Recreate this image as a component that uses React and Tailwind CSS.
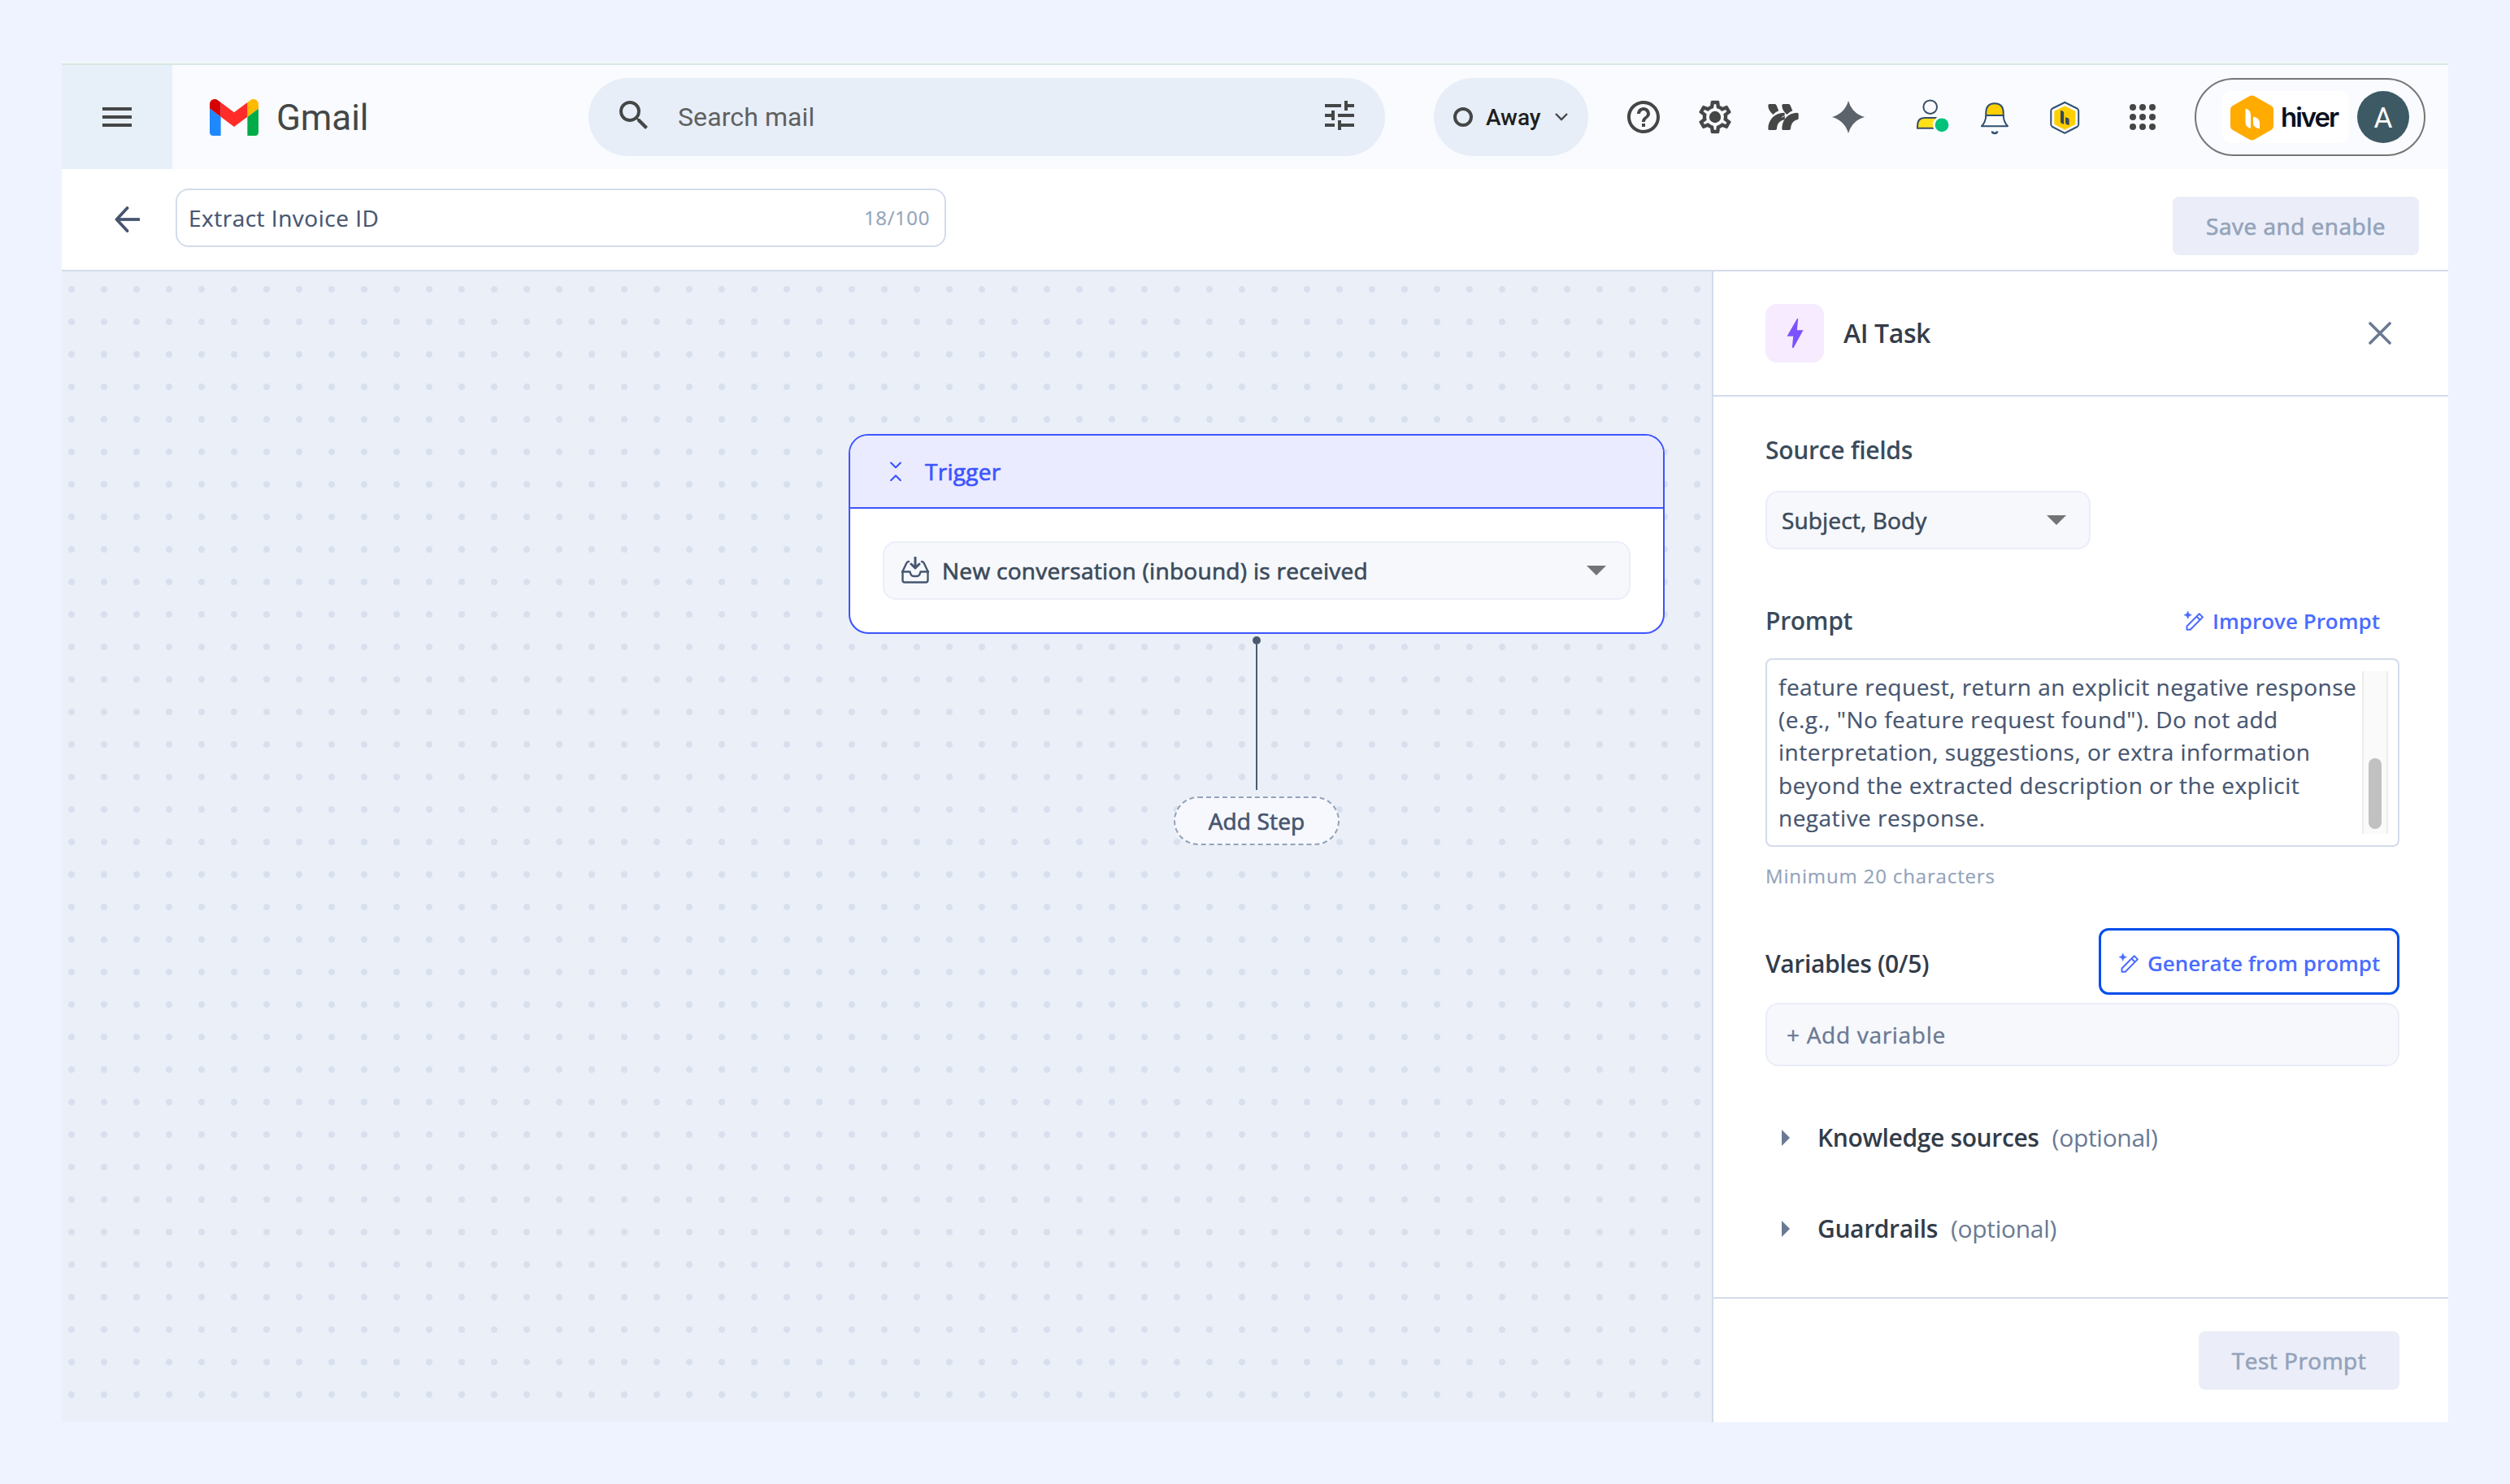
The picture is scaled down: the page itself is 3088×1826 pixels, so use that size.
import React from "react";
import { MdSearch, MdTune, MdHelpOutline } from "react-icons/md";

function GmailMark() {
  return (
    <svg className="h-[45px] w-[60px] shrink-0" viewBox="52 42 88 66">
      <path fill="#1e88ff" d="M58 108h14V74L52 59v43c0 3.32 2.69 6 6 6" />
      <path fill="#00ac47" d="M120 108h14c3.32 0 6-2.69 6-6V59l-20 15" />
      <path fill="#ffb900" d="M120 48v26l20-15v-8c0-7.42-8.47-11.65-14.4-7.2" />
      <path fill="#ff2c29" d="M72 74V48l24 18 24-18v26L96 92" />
      <path fill="#d60000" d="M52 51v8l20 15V48l-5.6-4.2c-5.94-4.45-14.4-.22-14.4 7.2" />
    </svg>
  );
}

function GearIcon({ className }) {
  return (
    <svg className={className} viewBox="0 0 24 24" fill="currentColor">
      <path d="M19.43 12.98c.04-.32.07-.64.07-.98 0-.34-.03-.66-.07-.98l2.11-1.65c.19-.15.24-.42.12-.64l-2-3.46a.5.5 0 0 0-.61-.22l-2.49 1c-.52-.4-1.08-.73-1.69-.98l-.38-2.65A.488.488 0 0 0 14 2h-4c-.25 0-.46.18-.49.42l-.38 2.65c-.61.25-1.17.59-1.69.98l-2.49-1a.566.566 0 0 0-.18-.03c-.17 0-.34.09-.43.25l-2 3.46c-.13.22-.07.49.12.64l2.11 1.65c-.04.32-.07.65-.07.98 0 .33.03.66.07.98l-2.11 1.65c-.19.15-.24.42-.12.64l2 3.46a.5.5 0 0 0 .61.22l2.49-1c.52.4 1.08.73 1.69.98l.38 2.65c.03.24.24.42.49.42h4c.25 0 .46-.18.49-.42l.38-2.65c.61-.25 1.17-.59 1.69-.98l2.49 1c.06.02.12.03.18.03.17 0 .34-.09.43-.25l2-3.46c.12-.22.07-.49-.12-.64l-2.11-1.65zm-1.98-1.71c.04.31.05.52.05.73 0 .21-.02.43-.05.73l-.14 1.13.89.7 1.08.84-.7 1.21-1.27-.51-1.04-.42-.9.68c-.43.32-.84.56-1.25.73l-1.06.43-.16 1.13-.2 1.35h-1.4l-.19-1.35-.16-1.13-1.06-.43c-.43-.18-.83-.41-1.23-.71l-.91-.7-1.06.43-1.27.51-.7-1.21 1.08-.84.89-.7-.14-1.13c-.03-.31-.05-.54-.05-.74s.02-.43.05-.73l.14-1.13-.89-.7-1.08-.84.7-1.21 1.27.51 1.04.42.9-.68c.43-.32.84-.56 1.25-.73l1.06-.43.16-1.13.2-1.35h1.39l.19 1.35.16 1.13 1.06.43c.43.18.83.41 1.23.71l.91.7 1.06-.43 1.27-.51.7 1.21-1.07.85-.89.7.14 1.13z" stroke="currentColor" strokeWidth="0.200" />
      <circle cx="12" cy="12" r="3.6" />
    </svg>
  );
}

function ChevronsIcon({ className }) {
  return (
    <svg className={className} viewBox="0 0 48 48" fill="currentColor">
      <path d="M7 8h6.5q1.5 0 2 1.5l2.8 6.8q-4.5 1.8-7 4.7Q5.300 15.500 5.300 10 5.300 8 7 8z" />
      <path d="M24 8h6.500q1.500 0 2 1.500l2.800 6.800q-4.500 1.800-7 4.700Q22.300 15.500 22.300 10 22.300 8 24 8z" />
      <path d="M5.300 38.500C5.300 27 14 19 24.500 18.800q1.500 0 1.300 1.800v6.600C19.500 28 16.500 32 16 38.200q-.1 1.800-1.800 1.800H7q-1.700 0-1.700-1.500z" />
      <path d="M22.300 38.500c0-11.500 8-19.500 18.500-19.700q1.900 0 1.900 1.800v4.800q0 1.600-1.500 1.800C36.500 28 33.500 32 33 38.200q-.1 1.800-1.800 1.800H24q-1.700 0-1.700-1.500z" />
      <path d="M22 24.500l6-4" stroke="#f9fbff" strokeWidth="0.8" />
    </svg>
  );
}

function PersonIcon({ className }) {
  return (
    <svg className={className} viewBox="0 0 52 52" fill="none">
      <circle cx="24.700" cy="13.700" r="8.300" stroke="#3a4f66" strokeWidth="2" />
      <path d="M9 39.800V37q0-10 9-10h14v12.800z" fill="#ffe11a" stroke="#3a4f66" strokeWidth="2" />
      <circle cx="39" cy="35.800" r="11" fill="#f9fbff" />
      <circle cx="39" cy="35.800" r="8.400" fill="#00c27a" />
    </svg>
  );
}

function BellIcon({ className }) {
  return (
    <svg className={className} viewBox="0 0 48 48" fill="none" stroke="#2f4f6f" strokeWidth="2" strokeLinejoin="round">
      <path d="M13.300 22v-4Q13.800 7.300 24 7.300T34.700 18v4z" fill="#ffcf00" />
      <path d="M13.300 22q-.3 8-5.300 13.300h32Q35 30 34.700 22z" />
      <path d="M21 41.500q0 2.500 3 2.500t3-2.500" strokeWidth="2.600" />
    </svg>
  );
}

function HexIcon({ className }) {
  return (
    <svg className={className} viewBox="0 0 48 48" fill="none">
      <path d="M24.200 6 39.500 13.500Q41.200 14.500 41.200 16.500V33q0 2-1.700 3L24.200 43.800 9 36Q7.300 35 7.300 33V16.500q0-2 1.700-3z" stroke="#2f4f6f" strokeWidth="2" strokeLinejoin="round" />
      <path d="M24.200 11.500 36.300 17.500v14.800L24.200 38.500 12.300 32.300V17.500z" fill="#ffcf00" stroke="#ffcf00" strokeWidth="2" strokeLinejoin="round" />
      <path d="M19 15.700l2.500.8q1.700.8 1.700 2.500v13.700l-2.600-.8q-1.600-.7-1.600-2.400zM25 24.300l2.800.8q1.900.8 1.900 2.500V34l-3-.8q-1.700-.7-1.700-2.400z" fill="#34495e" />
    </svg>
  );
}

function AppsIcon({ className }) {
  return (
    <svg className={className} viewBox="0 0 48 48" fill="currentColor">
      {[12, 24, 36].map((y) => [12, 24, 36].map((x) => <circle key={x + "-" + y} cx={x} cy={y} r="4" />))}
    </svg>
  );
}

function WandIcon() {
  return (
    <svg className="h-6 w-6 shrink-0" viewBox="0 0 24 24" fill="none" stroke="#4a6cff" strokeWidth="2" strokeLinejoin="round">
      <path d="M4.700 0Q5.300 4.100 9.400 4.700 5.300 5.300 4.700 9.400 4.100 5.300 0 4.700 4.100 4.100 4.700 0z" fill="#4a6cff" stroke="#4a6cff" strokeWidth="0.600" />
      <path d="M3.500 22.800v-4.300L18.700 3.200l4.200 4.200L7.700 22.800zM15.400 6.500l4.200 4.200" />
    </svg>
  );
}

function Caret() {
  return (
    <svg className="h-3 w-6 shrink-0" viewBox="0 0 24 12">
      <path d="M0 0h24L12 12z" fill="#737475" />
    </svg>
  );
}

function Header() {
  return (
    <header className="flex h-[132px] w-full items-center border-t-2 border-[#f1f8f7] bg-[#f9fbff] text-[#444746]">
      <div className="flex h-full w-full items-center border-t-2 border-[#d7e6e2]">
        <div className="flex h-full w-[136px] shrink-0 items-center justify-center bg-[#e7eff8]">
          <div className="flex w-9 flex-col gap-[6px]">
            <span className="h-1 bg-[#444746]" />
            <span className="h-1 bg-[#444746]" />
            <span className="h-1 bg-[#444746]" />
          </div>
        </div>
        <div className="ml-[46px] flex w-[211px] shrink-0 items-center gap-[22px]">
          <GmailMark />
          <span className="translate-y-px font-[Roboto,sans-serif] text-[44px] leading-none tracking-[-0.1px] text-[#444746]">Gmail</span>
        </div>
        <div className="ml-[255px] flex h-24 w-[980px] shrink-0 items-center rounded-full bg-[#e7eef8] pl-8 pr-[32px]">
          <MdSearch className="h-12 w-12 -translate-y-0.5" />
          <span className="ml-[30px] grow font-[Roboto,sans-serif] text-[32px] leading-none tracking-[0.1px] text-[#5f6060]">Search mail</span>
          <MdTune className="h-12 w-12 -translate-y-0.5" />
        </div>
        <div className="ml-[60px] flex h-24 w-[190px] shrink-0 items-center rounded-full bg-[#e7eef8] pl-6">
          <span className="h-6 w-6 rounded-full border-4 border-[#444746]" />
          <span className="ml-4 translate-y-px font-[Roboto,sans-serif] text-[28px] leading-none font-medium text-[#1f1f1f]">Away</span>
          <svg className="ml-[17px] h-[10px] w-4" viewBox="0 0 16 10" fill="none">
            <path d="M1 1l7 7 7-7" stroke="#444746" strokeWidth="2.400" />
          </svg>
        </div>
        <MdHelpOutline className="ml-[44px] h-12 w-12 shrink-0" />
        <GearIcon className="ml-10 h-12 w-12 shrink-0" />
        <ChevronsIcon className="ml-9 h-12 w-12 shrink-0" />
        <svg className="ml-8 h-12 w-12 shrink-0" viewBox="0 0 48 48">
          <path d="M24 4Q28.500 19.500 44 24 28.500 28.500 24 44 19.500 28.500 4 24 19.500 19.500 24 4z" fill="#5c636b" />
        </svg>
        <PersonIcon className="ml-[52px] h-[52px] w-[52px] shrink-0" />
        <BellIcon className="ml-7 h-12 w-12 shrink-0" />
        <HexIcon className="ml-[38px] h-12 w-12 shrink-0" />
        <AppsIcon className="ml-12 h-12 w-12 shrink-0" />
        <div className="ml-10 flex h-24 w-[284px] shrink-0 items-center rounded-full border-2 border-[#747775] pl-8 pr-[18px]">
          <div className="flex h-16 w-[156px] items-center rounded-[12px] bg-white pl-[10px]">
            <svg className="h-[56px] w-[53px] translate-y-px" viewBox="0 0 53 56">
              <path d="M23.500 1.200q3-1.600 6 0L50 13q3 1.700 3 5v20q0 3.300-3 5L29.500 54.800q-3 1.600-6 0L3 43q-3-1.700-3-5V18q0-3.300 3-5z" fill="#ffab00" />
              <path d="M18.500 16.500q6.500 1.500 6.500 7.500v17q-6.500-1.500-6.500-7.500zM28 26.500q8 1.500 8 7.500v7.500q-8-1.500-8-7z" fill="#fff" />
            </svg>
            <span className="ml-[9px] font-[Inter,sans-serif] text-[33px] leading-none font-semibold tracking-[-2px] text-[#0b1020]">hiver</span>
          </div>
          <div className="ml-[10px] flex h-16 w-16 items-center justify-center rounded-full bg-[#3d5a64] font-[Roboto,sans-serif] text-[35px] leading-none text-white">
            <span className="translate-y-px">A</span>
          </div>
        </div>
      </div>
    </header>
  );
}

function TitleBar() {
  return (
    <div className="flex h-[126px] shrink-0 items-start border-b-2 border-[#d3dceb] bg-white pt-6">
      <svg className="ml-[65px] mt-[22px] h-8 w-8 shrink-0" viewBox="0 0 32 32" fill="none" stroke="#475670" strokeWidth="3.800" strokeLinecap="round" strokeLinejoin="round">
        <path d="M31 16H3" strokeLinecap="butt" />
        <path d="M15.500 2 2.500 16l13 14" />
      </svg>
      <div className="ml-[43px] flex h-[72px] w-[948px] items-center justify-between rounded-[16px] border-2 border-[#d3dceb] pl-[14px] pr-[18px]">
        <span className="text-[28px] tracking-[0.500px] text-[#475670] [-webkit-text-stroke:0.2px_#475670]">Extract Invoice ID</span>
        <span className="text-[24px] tracking-[0.600px] text-[#94a3bb] [-webkit-text-stroke:0.2px_#94a3bb]">18/100</span>
      </div>
      <button className="ml-auto mr-9 mt-[10px] h-[72px] w-[303px] rounded-[8px] bg-[#ebeef8] text-[28px] tracking-[0.500px] text-[#94a3bb] [-webkit-text-stroke:0.7px_#94a3bb]">
        Save and enable
      </button>
    </div>
  );
}

function Canvas() {
  return (
    <div className="flex w-[2030px] shrink-0 flex-col items-start bg-[#eaeff8] bg-[radial-gradient(circle_at_12px_22px,#d8e0ed_3.500px,transparent_4.500px)] bg-[length:40px_40px]">
      <div className="ml-[968px] mt-[200px] flex w-[1004px] flex-col items-center">
        <div className="h-[246px] w-full overflow-hidden rounded-[24px] border-2 border-[#3d55ff] bg-white">
          <div className="flex h-[90px] items-center border-b-2 border-[#3d55ff] bg-[#eaebff] pl-[49px]">
            <svg className="h-6 w-[14px]" viewBox="0 0 14 24" fill="none" stroke="#3d55ff" strokeWidth="2.200" strokeLinecap="round" strokeLinejoin="round">
              <path d="M1.200 1.500 7 7.200l5.800-5.700M1.200 23 7 17.200l5.800 5.800" />
            </svg>
            <span className="ml-[29px] text-[28px] tracking-[0.300px] text-[#3d55ff] [-webkit-text-stroke:0.7px_#3d55ff]">Trigger</span>
          </div>
          <div className="mx-10 mt-10 flex h-[72px] items-center rounded-[16px] border-2 border-[#ebeef8] bg-[#f7f8fc] pl-[20px] pr-[28px]">
            <svg className="h-[33px] w-9 -translate-y-px" viewBox="0 0 36 33" fill="none" stroke="#475670" strokeWidth="2.400" strokeLinecap="round" strokeLinejoin="round">
              <path d="M18 1v12.500M13 9l5 5 5-5" strokeWidth="3" />
              <path d="M10 6Q8 6 7.200 8L2.500 18v11q0 2.500 2.500 2.500h26q2.500 0 2.500-2.500V18L28.800 8Q28 6 26 6" />
              <path d="M2 18.500h9.500q1.200 5.500 4.500 5.500h4q3.300 0 4.500-5.500H34" />
            </svg>
            <span className="ml-[15px] grow text-[28px] tracking-[0.290px] text-[#3b4b5b] [-webkit-text-stroke:0.7px_#3b4b5b]">New conversation (inbound) is received</span>
            <Caret />
          </div>
        </div>
        <span className="mt-[3px] h-[10px] w-[10px] rounded-full bg-[#4b5a70]" />
        <span className="h-[179px] w-0.5 bg-[#4b5a70]" />
        <div className="mt-2 flex h-[60px] w-[204px] items-center justify-center rounded-full border-2 border-dashed border-[#94a3bb] bg-[#f7f8fd] text-[28px] tracking-[0.150px] text-[#475670] [-webkit-text-stroke:0.7px_#475670]">
          Add Step
        </div>
      </div>
    </div>
  );
}

function OptionalRow({ title }) {
  return (
    <div className="flex h-10 items-center pl-5">
      <svg className="h-5 w-[10px]" viewBox="0 0 10 20">
        <path d="M0 0l10 10L0 20z" fill="#6b7a93" />
      </svg>
      <span className="ml-[34px] text-[30px] leading-none font-semibold tracking-[-0.360px] text-[#333c49]">{title}</span>
      <span className="ml-4 text-[30px] leading-none tracking-[-0.300px] text-[#6b7a93]">(optional)</span>
    </div>
  );
}

const promptLines = [
  "feature request, return an explicit negative response",
  '(e.g., "No feature request found"). Do not add',
  "interpretation, suggestions, or extra information",
  "beyond the extracted description or the explicit",
  "negative response.",
];

function Panel() {
  return (
    <aside className="flex w-[906px] shrink-0 flex-col border-l-2 border-[#d3dceb] bg-white">
      <div className="flex h-[154px] shrink-0 items-center border-b-2 border-[#d3dceb] pl-16 pr-[70px]">
        <div className="flex h-[72px] w-[72px] items-center justify-center rounded-[14px] bg-[#f6ebff]">
          <svg className="h-9 w-[21px]" viewBox="0 0 21 36">
            <path d="M13 0h1.200L12.800 14.300H20.500L8.500 36H6.800L8.200 21.800H.5z" fill="#7c52ff" />
          </svg>
        </div>
        <span className="ml-6 grow text-[32px] font-semibold tracking-[-0.400px] text-[#333c49]">AI Task</span>
        <svg className="h-7 w-7" viewBox="0 0 28 28" stroke="#6b7a93" strokeWidth="3.600" strokeLinecap="round">
          <path d="M2 2l24 24M26 2 2 26" />
        </svg>
      </div>
      <div className="flex h-[1110px] shrink-0 flex-col border-b-2 border-[#d3dceb] pl-16 pr-[60px] pt-[46px]">
        <div className="flex h-10 items-center text-[30px] leading-none font-semibold tracking-[-0.300px] text-[#3b4b5b]">Source fields</div>
        <div className="mt-[30px] flex h-[72px] w-[400px] items-center justify-between rounded-[16px] border-2 border-[#ebeef8] bg-[#f7f8fc] pl-[18px] pr-[28px] text-[28px] tracking-[0.150px] text-[#3b4b5b] [-webkit-text-stroke:0.6px_#3b4b5b]">
          Subject, Body
          <Caret />
        </div>
        <div className="mt-[68px] flex h-10 items-center justify-between pr-6">
          <span className="text-[30px] leading-none font-semibold tracking-[-0.300px] text-[#3b4b5b]">Prompt</span>
          <span className="flex items-center gap-[11px] text-[26px] leading-none font-semibold text-[#4a6cff]">
            <WandIcon />
            Improve Prompt
          </span>
        </div>
        <div className="mt-[26px] flex h-[232px] w-[780px] rounded-[8px] border-2 border-[#d3dceb] pl-[14px] pr-[12px] pt-[14px]">
          <div className="-mt-px grow text-[28px] leading-[40.200px] tracking-[0.490px] text-[#475670] [-webkit-text-stroke:0.2px_#475670]">
            {promptLines.map((line) => (
              <div key={line} className="whitespace-nowrap">{line}</div>
            ))}
          </div>
          <div className="flex h-[200px] w-8 shrink-0 justify-center border-x-2 border-[#ececec] bg-[#fafafa] pt-[107px]">
            <span className="h-[87px] w-4 rounded-full bg-[#c1c1c1]" />
          </div>
        </div>
        <div className="mt-[16px] flex h-10 items-center text-[24px] leading-none tracking-[0.850px] text-[#94a3bb] [-webkit-text-stroke:0.2px_#94a3bb]">Minimum 20 characters</div>
        <div className="mt-[44px] flex h-[82px] items-center justify-between">
          <span className="pt-[5px] text-[30px] leading-none font-semibold tracking-[-0.360px] text-[#333c49]">Variables (0/5)</span>
          <button className="flex h-[82px] w-[370px] items-center gap-[11px] rounded-[12px] border-[3px] border-[#004eeb] pl-[22px] pt-[4px] text-[26px] leading-none font-semibold text-[#4a6cff]">
            <WandIcon />
            <span className="whitespace-nowrap">Generate from prompt</span>
          </button>
        </div>
        <div className="mt-[10px] flex h-[78px] items-center rounded-[16px] border-2 border-[#ebedf8] bg-[#f7f8fc] pl-6 text-[28px] tracking-[0.700px] text-[#6b7a93] [-webkit-text-stroke:0.4px_#6b7a93]">
          + Add variable
        </div>
        <div className="mt-[68px] flex flex-col gap-[72px]">
          <OptionalRow title="Knowledge sources" />
          <OptionalRow title="Guardrails" />
        </div>
      </div>
      <div className="flex grow items-center justify-end pr-[60px]">
        <button className="h-[72px] w-[247px] rounded-[8px] bg-[#ebeef8] text-[28px] tracking-[0.500px] text-[#94a3bb] [-webkit-text-stroke:0.7px_#94a3bb]">Test Prompt</button>
      </div>
    </aside>
  );
}

export default function App() {
  return (
    <div className="h-[1826px] w-[3088px] overflow-hidden bg-[#eff3ff] pl-[76px] pt-[76px] font-['Open_Sans','Noto_Sans',sans-serif]">
      <div className="flex h-[1674px] w-[2936px] flex-col overflow-hidden">
        <Header />
        <TitleBar />
        <div className="flex min-h-0 grow">
          <Canvas />
          <Panel />
        </div>
      </div>
    </div>
  );
}
